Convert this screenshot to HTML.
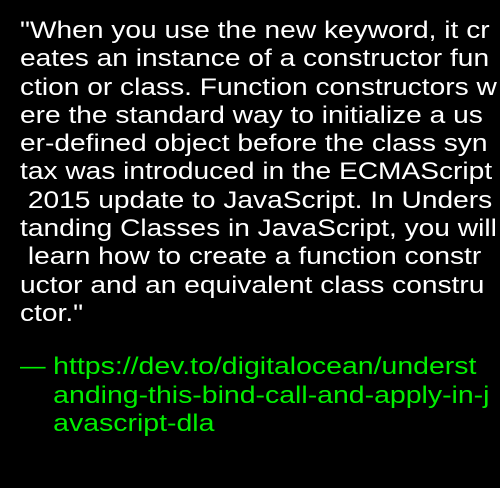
<!DOCTYPE html>
<html><head><meta charset="utf-8"><style>
html,body{margin:0;padding:0;background:#000;width:500px;height:488px;overflow:hidden}
.q{position:absolute;left:20px;top:17px;font-family:"Liberation Sans",sans-serif;font-size:24px;line-height:28.3px;color:#fff;white-space:pre;transform:scaleX(1.172);transform-origin:0 0}
.g{position:absolute;left:20px;top:353px;font-family:"Liberation Sans",sans-serif;font-size:24px;line-height:28.5px;color:#00ee00;white-space:pre;transform:scaleX(1.185);transform-origin:0 0}
.g span{display:inline-block;width:28px}
.g i{font-style:normal;display:inline-block;transform:scaleX(0.9);transform-origin:0 0}
</style></head><body>
<div class="q">"When you use the new keyword, it cr
eates an instance of a constructor fun
ction or class. Function constructors w
ere the standard way to initialize a us
er-defined object before the class syn
tax was introduced in the ECMAScript
 2015 update to JavaScript. In Unders
tanding Classes in JavaScript, you will
 learn how to create a function constr
uctor and an equivalent class constru
ctor."</div>
<div class="g"><span><i>—</i></span>https://dev.to/digitalocean/underst
<span></span>anding-this-bind-call-and-apply-in-j
<span></span>avascript-dla</div>
</body></html>
